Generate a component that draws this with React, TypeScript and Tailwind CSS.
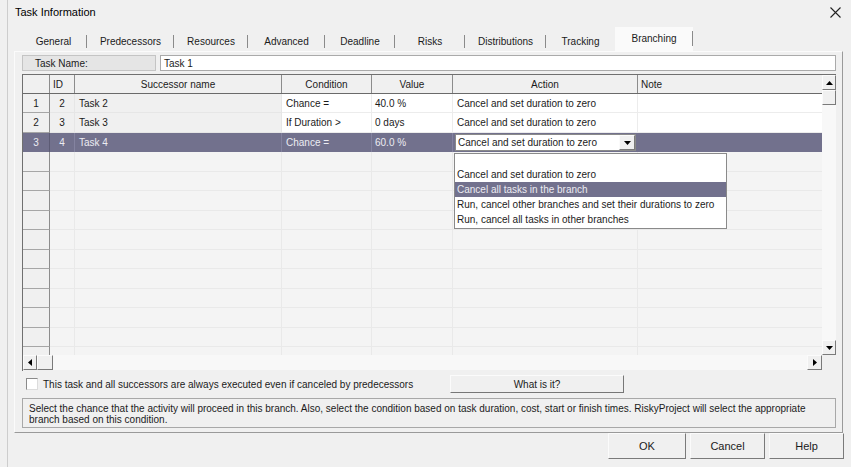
import React from 'react';

const tabs = [
  { label: 'General', w: 67 },
  { label: 'Predecessors', w: 87 },
  { label: 'Resources', w: 74 },
  { label: 'Advanced', w: 77 },
  { label: 'Deadline', w: 70 },
  { label: 'Risks', w: 70 },
  { label: 'Distributions', w: 81 },
  { label: 'Tracking', w: 69 },
  { label: 'Branching', w: 78, active: true },
];

const rows = [
  { id: '2', name: 'Task 2', cond: 'Chance =', value: '40.0 %', action: 'Cancel and set duration to zero' },
  { id: '3', name: 'Task 3', cond: 'If Duration >', value: '0 days', action: 'Cancel and set duration to zero' },
  { id: '4', name: 'Task 4', cond: 'Chance =', value: '60.0 %', action: 'Cancel and set duration to zero', selected: true },
];

const rowHeights = [19, 20, 19, 20, 19, 20, 19, 20, 19, 20, 19, 20, 19];

const options = [
  '',
  'Cancel and set duration to zero',
  'Cancel all tasks in the branch',
  'Run, cancel other branches and set their durations to zero',
  'Run, cancel all tasks in other branches',
];

function Arrow({ dir }: { dir: 'up' | 'down' | 'left' | 'right' }) {
  const pts = {
    up: '0,4 7,4 3.5,0',
    down: '0,0 7,0 3.5,4',
    left: '4,0 4,7 0,3.5',
    right: '0,0 0,7 4,3.5',
  }[dir];
  const vertical = dir === 'up' || dir === 'down';
  return (
    <svg width={vertical ? 7 : 4} height={vertical ? 4 : 7} viewBox={vertical ? '0 0 7 4' : '0 0 4 7'}>
      <polygon points={pts} fill="#000" />
    </svg>
  );
}

function ScrollBtn({ dir, className = '' }: { dir?: 'up' | 'down' | 'left' | 'right'; className?: string }) {
  return (
    <div
      className={`flex items-center justify-center bg-[#f0f0f0] border border-t-[#fbfbfb] border-l-[#fbfbfb] border-r-[#7a7a7a] border-b-[#7a7a7a] ${className}`}
    >
      {dir && <Arrow dir={dir} />}
    </div>
  );
}

export default function App() {
  return (
    <div className="relative w-[851px] h-[467px] bg-[#f0f0f0] overflow-hidden font-['Liberation_Sans',Arial,sans-serif] text-[10px] text-[#1b1b1b] flex">
      <div className="ml-[7px] flex-1 border-l border-[#cdcdcd] flex flex-col">
        {/* title bar */}
        <div className="h-[24px] flex items-center justify-between pl-[7px] pr-[10px]">
          <span className="text-[11px] text-black">Task Information</span>
          <svg width="11" height="11" viewBox="0 0 11 11">
            <path d="M0.5 0.5 L10.5 10.5 M10.5 0.5 L0.5 10.5" stroke="#222" strokeWidth="1.1" />
          </svg>
        </div>

        {/* tabs */}
        <div className="h-[27px] flex items-end ml-[12px]">
          {tabs.map((t, i) => {
            const nextActive = tabs[i + 1]?.active;
            return (
              <div
                key={t.label}
                style={{ width: t.w }}
                className={`relative flex items-center justify-center ${t.active ? 'h-[24px] bg-[#fafafa] pb-[2px]' : 'h-[20px]'}`}
              >
                <span>{t.label}</span>
                {!nextActive && (
                  <div className={`absolute right-0 w-px bg-[#8a8a8a] ${t.active ? 'top-[4px] h-[15px]' : 'top-[4px] h-[13px]'}`} />
                )}
              </div>
            );
          })}
        </div>

        {/* tab panel */}
        <div className="ml-[6px] w-[829px] h-[382px] border border-t-[#fbfbfb] border-l-[#fbfbfb] border-r-[#9a9a9a] border-b-[#9a9a9a] flex flex-col pl-[7px] pr-[6px] pt-[3px]">
          {/* task name */}
          <div className="h-[16px] flex gap-[4px]">
            <div className="w-[134px] bg-[#e5e5e5] border border-[#c4c4c4] flex items-center pl-[12px]">Task Name:</div>
            <div className="flex-1 bg-white border border-[#aaaaaa] flex items-center pl-[3px]">Task 1</div>
          </div>

          {/* grid */}
          <div className="mt-[3px] h-[297px] border-t border-l border-[#707070] flex">
            <div className="w-[799px] flex flex-col">
              {/* header */}
              <div className="h-[19px] flex bg-[#f0f0f0] border-b border-[#6a6a6a]">
                <div className="w-[27px] border-r border-[#8c8c8c]" />
                <div className="w-[25px] border-r border-[#8c8c8c] flex items-center pl-[3px]">ID</div>
                <div className="w-[207px] border-r border-[#8c8c8c] flex items-center justify-center">Successor name</div>
                <div className="w-[90px] border-r border-[#8c8c8c] flex items-center justify-center">Condition</div>
                <div className="w-[81px] border-r border-[#8c8c8c] flex items-center justify-center">Value</div>
                <div className="w-[185px] border-r border-[#8c8c8c] flex items-center justify-center">Action</div>
                <div className="w-[184px] flex items-center pl-[3px]">Note</div>
              </div>

              {/* rows */}
              {rowHeights.map((h, i) => {
                const r = rows[i];
                if (!r) {
                  return (
                    <div key={i} style={{ height: h }} className="flex bg-[#f4f4f4]">
                      <div className="w-[27px] bg-[#f0f0f0] border-r border-b border-r-[#8c8c8c] border-b-[#a6a6a6]" />
                      <div className="w-[25px] border-r border-b border-[#e9e9e9]" />
                      <div className="w-[207px] border-r border-b border-[#e9e9e9]" />
                      <div className="w-[90px] border-r border-b border-[#e9e9e9]" />
                      <div className="w-[81px] border-r border-b border-[#e9e9e9]" />
                      <div className="w-[185px] border-r border-b border-[#e9e9e9]" />
                      <div className="w-[184px] border-b border-[#e9e9e9]" />
                    </div>
                  );
                }
                if (r.selected) {
                  return (
                    <div key={i} style={{ height: h }} className="flex bg-[#72718d] text-[#ececf2]">
                      <div className="w-[27px] border-r border-[#5c5b74] flex items-center justify-center">{i + 1}</div>
                      <div className="w-[25px] border-r border-[#8483a0] flex items-center justify-center">{r.id}</div>
                      <div className="w-[207px] border-r border-[#8483a0] flex items-center pl-[4px]">{r.name}</div>
                      <div className="w-[90px] border-r border-[#8483a0] flex items-center pl-[4px]">{r.cond}</div>
                      <div className="w-[81px] border-r border-[#8483a0] flex items-center pl-[3px]">{r.value}</div>
                      <div className="w-[185px] flex items-stretch py-[1px] pl-[2px] pr-[2px]">
                        <div className="flex-1 bg-white border border-[#8a8a8a] flex items-center text-[#1b1b1b]">
                          <span className="flex-1 pl-[2px]">{r.action}</span>
                          <ScrollBtn dir="down" className="w-[16px] h-full" />
                        </div>
                      </div>
                      <div className="w-[184px]" />
                    </div>
                  );
                }
                return (
                  <div key={i} style={{ height: h }} className="flex">
                    <div className="w-[27px] bg-[#f0f0f0] border-r border-b border-r-[#8c8c8c] border-b-[#a6a6a6] flex items-center justify-center">{i + 1}</div>
                    <div className="w-[25px] bg-[#f0f0f0] border-r border-b border-[#e6e6e6] flex items-center justify-center">{r.id}</div>
                    <div className="w-[207px] bg-[#f0f0f0] border-r border-b border-[#e6e6e6] flex items-center pl-[4px]">{r.name}</div>
                    <div className="w-[90px] bg-white border-r border-b border-[#ececec] flex items-center pl-[4px]">{r.cond}</div>
                    <div className="w-[81px] bg-white border-r border-b border-[#ececec] flex items-center pl-[3px]">{r.value}</div>
                    <div className="w-[185px] bg-white border-r border-b border-[#ececec] flex items-center pl-[4px]">{r.action}</div>
                    <div className="w-[184px] bg-white border-b border-[#ececec]" />
                  </div>
                );
              })}

              {/* partial row */}
              <div className="h-[8px] flex bg-[#f4f4f4]">
                <div className="w-[27px] bg-[#f0f0f0] border-r border-[#8c8c8c]" />
                <div className="w-[25px] border-r border-[#e9e9e9]" />
                <div className="w-[207px] border-r border-[#e9e9e9]" />
                <div className="w-[90px] border-r border-[#e9e9e9]" />
                <div className="w-[81px] border-r border-[#e9e9e9]" />
                <div className="w-[185px] border-r border-[#e9e9e9]" />
                <div className="w-[184px]" />
              </div>

              {/* horizontal scrollbar */}
              <div className="h-[15px] flex bg-[#f8f8f8]">
                <ScrollBtn dir="left" className="w-[14px]" />
                <ScrollBtn className="w-[16px]" />
                <div className="flex-1" />
                <ScrollBtn dir="right" className="w-[15px]" />
              </div>
            </div>

            {/* vertical scrollbar */}
            <div className="w-[14px] flex flex-col">
              <div className="h-[280px] flex flex-col bg-[#f8f8f8]">
                <ScrollBtn dir="up" className="h-[15px]" />
                <ScrollBtn className="h-[15px]" />
                <div className="flex-1" />
                <ScrollBtn dir="down" className="h-[15px]" />
              </div>
              <div className="flex-1 bg-[#f0f0f0]" />
            </div>
          </div>

          {/* checkbox + what is it */}
          <div className="mt-[4px] h-[18px] flex items-center">
            <div className="w-[428px] flex items-center pl-[4px]">
              <div className="w-[12px] h-[12px] bg-white border border-t-[#8a8a8a] border-l-[#8a8a8a] border-r-[#dcdcdc] border-b-[#dcdcdc]" />
              <span className="ml-[5px]">This task and all successors are always executed even if canceled by predecessors</span>
            </div>
            <div className="w-[174px] h-[18px] flex items-center justify-center bg-[#f0f0f0] border border-t-[#fbfbfb] border-l-[#fbfbfb] border-r-[#777] border-b-[#777]">
              What is it?
            </div>
          </div>

          {/* info box */}
          <div className="mt-[5px] h-[30px] border border-[#a8a8a8] px-[6px] pt-[4px] leading-[11px]">
            Select the chance that the activity will proceed in this branch. Also, select the condition based on task duration, cost, start or finish times. RiskyProject will select the appropriate branch based on this condition.
          </div>
        </div>

        {/* buttons */}
        <div className="flex justify-end gap-[4px] pr-[0px] w-[836px]">
          {['OK', 'Cancel', 'Help'].map((b, i) => (
            <div
              key={b}
              className={`${i === 0 ? 'w-[78px]' : 'w-[75px]'} h-[26px] flex items-center justify-center text-[11px] bg-[#f0f0f0] border border-t-[#fbfbfb] border-l-[#fbfbfb] border-r-[#7a7a7a] border-b-[#7a7a7a]`}
            >
              {b}
            </div>
          ))}
        </div>
      </div>

      {/* open dropdown list */}
      <div className="absolute left-[454px] top-[153px] w-[273px] h-[76px] bg-white border border-[#8a8a8a] flex flex-col">
        {options.map((o, i) => (
          <div
            key={i}
            className={`${i === 0 ? 'h-[13px]' : 'h-[15px]'} flex items-center pl-[2px] ${i === 2 ? 'bg-[#72718d] text-[#ececf2]' : ''}`}
          >
            {o}
          </div>
        ))}
      </div>
    </div>
  );
}
